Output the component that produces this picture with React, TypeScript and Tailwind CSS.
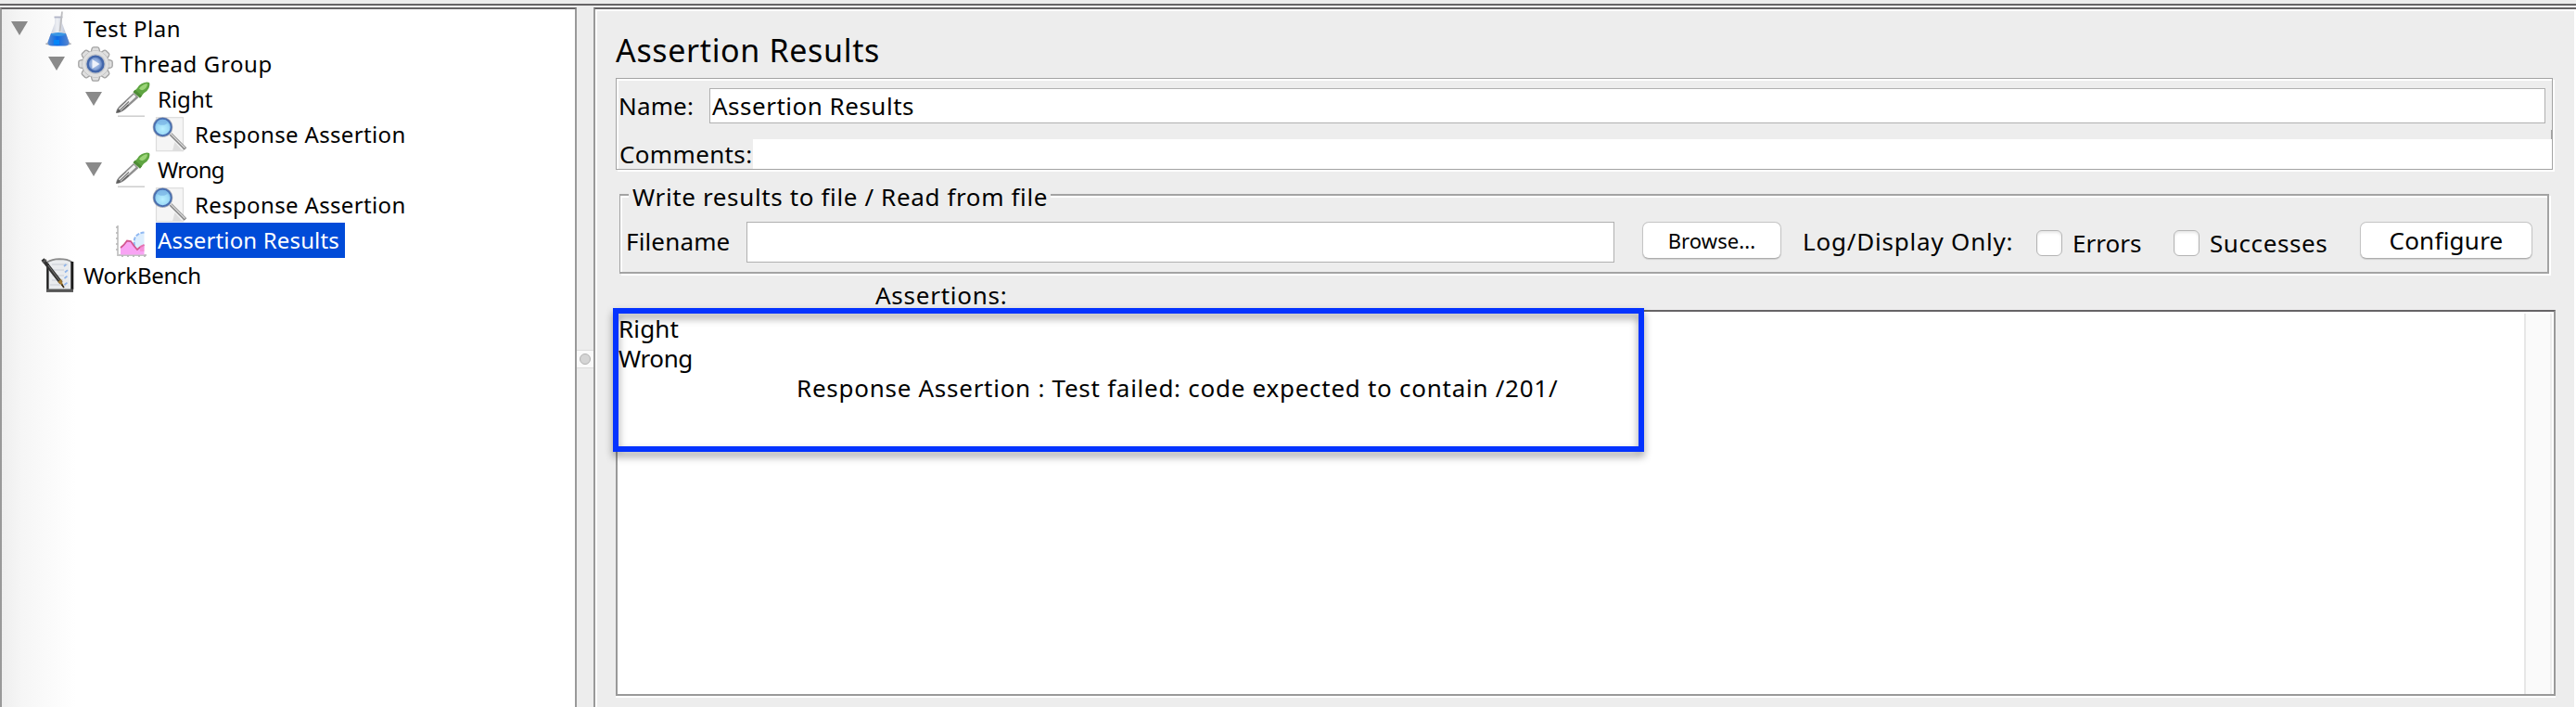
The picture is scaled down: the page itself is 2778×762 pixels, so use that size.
import React from "react";

function Flask() {
  return (
    <svg width="38" height="38" viewBox="0 0 38 38">
      <defs>
        <linearGradient id="flaskWater" x1="0" x2="1">
          <stop offset="0" stopColor="#5b8ad0" />
          <stop offset="0.45" stopColor="#0a6ae6" />
          <stop offset="1" stopColor="#5b86cc" />
        </linearGradient>
        <linearGradient id="flaskGlass" x1="0" x2="1">
          <stop offset="0" stopColor="#b9c0d2" />
          <stop offset="0.45" stopColor="#eef0f4" />
          <stop offset="1" stopColor="#aab2c8" />
        </linearGradient>
      </defs>
      <ellipse cx="19" cy="35.3" rx="14" ry="1.7" fill="#8e9099" opacity="0.75" />
      <path d="M15 7 V13 L7.5 33.5 Q7.5 37 12 37 L26 37 Q30.5 37 30.5 33.5 L23 13 V7 Z" fill="url(#flaskGlass)" />
      <path d="M11 24 H27 L30.5 33.5 Q30.5 37.6 26 37.6 L12 37.6 Q7.5 37.6 7.5 33.5 Z" fill="url(#flaskWater)" />
      <ellipse cx="19" cy="25" rx="7.8" ry="1.9" fill="#3a96e4" />
      <rect x="14" y="31" width="6" height="5" fill="#0486f8" />
      <path d="M14.5 6.5 H23.5" stroke="#b0b4c6" strokeWidth="1.8" />
      <path d="M23 0.5 L20.5 22" stroke="#bdbdc0" strokeWidth="1.8" />
    </svg>
  );
}

function Gear() {
  const teeth = [0, 45, 90, 135, 180, 225, 270, 315];
  return (
    <svg width="38" height="38" viewBox="0 0 38 38">
      <defs>
        <radialGradient id="gearCore" cx="0.45" cy="0.5" r="0.6">
          <stop offset="0" stopColor="#c3d3ee" />
          <stop offset="0.55" stopColor="#87a5d8" />
          <stop offset="1" stopColor="#35589f" />
        </radialGradient>
      </defs>
      <g fill="#dfdfdf" stroke="#a3a3a3" strokeWidth="1.3">
        {teeth.map((a) => (
          <path key={a} d="M14 7 L15.2 2.2 Q15.6 0.8 17 0.8 H21 Q22.4 0.8 22.8 2.2 L24 7" transform={`rotate(${a} 19 19)`} />
        ))}
        <circle cx="19" cy="19" r="13.8" />
      </g>
      <circle cx="19" cy="19" r="14.2" fill="#e0e0e0" />
      <circle cx="19" cy="19" r="10.8" fill="#c3c6cc" />
      <circle cx="19" cy="19" r="8.4" fill="url(#gearCore)" stroke="#4266aa" strokeWidth="2.4" />
      <path d="M15.5 14 L23.5 19 L15.5 24 Z" fill="#eef2fa" />
    </svg>
  );
}

function Dropper() {
  return (
    <svg width="38" height="38" viewBox="0 0 38 38">
      <path d="M3 37.2 H32" stroke="#bdbdbd" strokeWidth="1.4" opacity="0.8" />
      <path d="M1 34 Q1 30 5 26 L20 12 L25.5 17 L11 30 Q6 34 1 34 Z" fill="#8f8f8f" />
      <path d="M1.5 33.5 Q2 30 6 26.5 L12 21 L15 25.5 L9 30.5 Q6 33 1.5 33.5 Z" fill="#5c5c5c" />
      <path d="M5 30.5 L21.5 15" stroke="#f2f2f2" strokeWidth="3.2" />
      <path d="M5 31 L15 21.5" stroke="#777777" strokeWidth="1.2" />
      <path d="M20 11 L24 7 Q25 4 29 2 Q34 -0.5 37 1 Q38 3 36.5 7 Q34.5 11 31 12.5 L27.5 17 Z" fill="#5fa541" />
      <path d="M26 7.5 Q29 3 34.5 2 Q36 4 32 8 Q29 10.5 26 7.5 Z" fill="#9bd477" />
      <path d="M20.5 10 L28 16.5" stroke="#4d8a35" strokeWidth="3" />
    </svg>
  );
}

function Magnifier() {
  return (
    <svg width="38" height="38" viewBox="0 0 38 38">
      <defs>
        <radialGradient id="lens" cx="0.5" cy="0.6" r="0.6">
          <stop offset="0" stopColor="#b9f0ff" />
          <stop offset="0.6" stopColor="#9bd9f6" />
          <stop offset="1" stopColor="#69a9df" />
        </radialGradient>
      </defs>
      <rect x="4.5" y="0.7" width="29" height="36" fill="#f5f5f5" stroke="#dcdcdc" strokeWidth="1.2" />
      <path d="M22 36.5 L24.5 27 L33 36.5 Z" fill="#dedede" />
      <path d="M20 18.5 L36 34.5" stroke="#858585" strokeWidth="3.6" />
      <path d="M20 18 L35.5 33.5" stroke="#dcdcdc" strokeWidth="1.2" />
      <circle cx="11.5" cy="11" r="10.8" fill="#a9adb8" />
      <circle cx="11.5" cy="11" r="9.2" fill="url(#lens)" stroke="#4a6fb0" strokeWidth="1.9" />
      <ellipse cx="11" cy="5.8" rx="5.5" ry="3" fill="#7db7e6" opacity="0.8" />
    </svg>
  );
}

function ResultsChart() {
  return (
    <svg width="38" height="38" viewBox="0 0 38 38">
      <path d="M3 3 V35 H34" fill="none" stroke="#c4c4c4" strokeWidth="1.8" />
      <path d="M1 5 H3 M1 11 H3 M1 17 H3 M1 23 H3 M1 29 H3 M8 37 V35 M14 37 V35 M20 37 V35 M26 37 V35 M32 37 V35" stroke="#b4b4b4" strokeWidth="1.6" />
      <path d="M20 27 Q20 11 31.5 10.5 V27 Z" fill="#dcedfd" />
      <path d="M21 25 Q18.5 12 31.5 10.5" fill="none" stroke="#8fb8f2" strokeWidth="2" strokeDasharray="4 1.6" />
      <path d="M6 34.5 V27 L9.5 24 L13 19.5 L17 20 L20.5 25 L24 29 L27.5 25.5 L31.5 24 V34.5 Z" fill="#f8a4f4" />
      <path d="M6 27 L9.5 24 L13 19.5 L17 20 L20.5 25 L24 29 L27.5 26 L31.5 24" fill="none" stroke="#d2568f" strokeWidth="1.8" />
      <path d="M27 31 V25 L31.5 23 V31" fill="#f383c8" opacity="0.6" />
    </svg>
  );
}

function Notebook() {
  return (
    <svg width="38" height="38" viewBox="0 0 38 38">
      <path d="M7.5 4 Q8 1.5 19 1.2 Q32 1.5 33.5 4 V35.5 H7.5 Z" fill="#e9ebee" />
      <path d="M7 4.5 Q12 1.5 20 1.2 Q29 1.2 33.5 4.5" fill="none" stroke="#8b8b8b" strokeWidth="1.8" />
      <path d="M7.4 6 V34" stroke="#1c1c1c" strokeWidth="2.4" />
      <path d="M33.8 4 V34" stroke="#1c1c1c" strokeWidth="3" />
      <path d="M6 35.2 H35" stroke="#555555" strokeWidth="3.4" />
      <path d="M12 7 H29 M12 13 H25 M12 19 H25 M12 24 H24 M10 29 H27" stroke="#d3d7de" strokeWidth="1.3" />
      <path d="M25 9 l2.4 -2 M26 15.5 l3 -2.4 M25.5 22 l3 -2.4 M25.5 29 l3 -2.4" stroke="#8fb4ea" strokeWidth="1.7" />
      <path d="M2 1.5 L4.5 4.5 L22 27" fill="none" stroke="#333333" strokeWidth="4" />
      <path d="M2 5 L6 2" stroke="#5a5a5a" strokeWidth="1.8" />
      <path d="M8 8 L20 24" stroke="#777777" strokeWidth="1" />
      <path d="M18.4 26 L22 22.6 L24.6 31.2 Z" fill="#a17a33" />
      <path d="M22.5 28.5 L25 32" stroke="#3a2c14" strokeWidth="1.6" />
    </svg>
  );
}

type RowProps = {
  indent: string;
  icon: React.ReactNode;
  label: string;
  tracking: string;
  expandable?: boolean;
  selected?: boolean;
};

function TreeRow({ indent, icon, label, tracking, expandable, selected }: RowProps) {
  return (
    <div className={`flex h-[38px] items-center ${indent}`}>
      <div className="w-[32px] shrink-0">
        {expandable && (
          <svg width="18" height="15" viewBox="0 0 18 15" className="-mt-px block">
            <path d="M0 0 H18 L9 15 Z" fill="#8a8a8a" />
          </svg>
        )}
      </div>
      <div className="shrink-0">{icon}</div>
      <div
        className={`ml-[6px] h-[38px] whitespace-nowrap pl-[2px] text-[24px] leading-[38px] ${tracking} ${
          selected ? "w-[204px] bg-[#004bd8] text-white" : ""
        }`}
      >
        {label}
      </div>
    </div>
  );
}

function Checkbox() {
  return (
    <span className="block size-[28px] shrink-0 rounded-[6px] border border-[#b4b4b4] bg-white shadow-[inset_0_2px_3px_#e6e6e6]" />
  );
}

export default function App() {
  return (
    <div className="flex h-[762px] w-[2778px] flex-col overflow-hidden bg-[#ededed] font-['Noto_Sans',sans-serif] text-black">
      <div className="h-[4px] shrink-0" />
      <div className="h-[2px] shrink-0 bg-[#666466]" />
      <div className="h-[2px] shrink-0" />

      <div className="flex h-[754px]">
        <aside className="w-[622px] shrink-0 border-x-2 border-t-2 border-x-[#999999] border-t-[#666466] bg-white bg-[linear-gradient(to_right,#eeeeee_0px,#f6f6f6_22px,#ffffff_80px)] pt-[2px]">
          <TreeRow indent="pl-[10px]" expandable icon={<Flask />} label="Test Plan" tracking="tracking-[0.5px]" />
          <TreeRow indent="pl-[50px]" expandable icon={<Gear />} label="Thread Group" tracking="tracking-[0.6px]" />
          <TreeRow indent="pl-[90px]" expandable icon={<Dropper />} label="Right" tracking="tracking-[0px]" />
          <TreeRow indent="pl-[130px]" icon={<Magnifier />} label="Response Assertion" tracking="tracking-[0.35px]" />
          <TreeRow indent="pl-[90px]" expandable icon={<Dropper />} label="Wrong" tracking="tracking-[-0.8px]" />
          <TreeRow indent="pl-[130px]" icon={<Magnifier />} label="Response Assertion" tracking="tracking-[0.35px]" />
          <TreeRow indent="pl-[90px]" selected icon={<ResultsChart />} label="Assertion Results" tracking="tracking-[0.15px]" />
          <TreeRow indent="pl-[10px]" icon={<Notebook />} label="WorkBench" tracking="tracking-[-0.3px]" />
        </aside>

        <div className="w-[18px] shrink-0 pt-[369px]">
          <div className="flex h-[20px] items-center justify-center border-y border-[#dcdcdc] bg-[#fafafa]">
            <span className="block size-[12px] rounded-full border border-[#b2b2b2] bg-[#d5d5d5]" />
          </div>
        </div>

        <main className="w-[2138px] shrink-0 border-l-2 border-t-2 border-l-[#999999] border-t-[#666466]">
          <div className="h-[752px] border-l-2 border-r-2 border-t-2 border-white pl-[20px]">
            <h1 className="h-[72px] whitespace-nowrap pt-[10px] text-[34px] leading-[64px] tracking-[0.65px]">Assertion Results</h1>

            <section className="h-[99px] w-[2089px] border border-[#a3a3a3] shadow-[2px_2px_0_white,inset_2px_2px_0_white]">
              <div className="flex h-[65px] pt-[10px]">
                <label className="w-[100px] shrink-0 whitespace-nowrap pl-[2px] text-[26px] leading-[38px] tracking-[0.15px]">Name:</label>
                <div className="h-[38px] w-[1980px] whitespace-nowrap border border-[#b0b0b0] bg-white pl-[2px] text-[26px] leading-[36px] tracking-[0.5px]">
                  Assertion Results
                </div>
                <span className="ml-[6px] mt-[45px] block h-[10px] w-px bg-[#a3a3a3]" />
              </div>
              <div className="flex h-[32px]">
                <label className="ml-[2px] w-[145px] shrink-0 whitespace-nowrap pl-px text-[26px] leading-[32px] tracking-[0.35px]">Comments:</label>
                <div className="h-[32px] flex-1 bg-white" />
              </div>
            </section>

            <section className="ml-[4px] mt-[26px] h-[86px] w-[2081px] border-2 border-l border-[#a3a3a3] shadow-[2px_2px_0_white,inset_2px_2px_0_white]">
              <div className="-mt-[10px] ml-[9px] h-[32px] w-[455px] whitespace-nowrap bg-[#ededed] pl-[4px] text-[26px] leading-[22px] tracking-[0.63px]">
                Write results to file / Read from file
              </div>
              <div className="flex h-[60px] pt-[6px]">
                <label className="w-[136px] shrink-0 whitespace-nowrap pl-[6px] text-[26px] leading-[42px] tracking-[0.15px]">Filename</label>
                <div className="h-[44px] w-[936px] shrink-0 border border-[#b0b0b0] bg-white" />
                <button className="ml-[30px] h-[40px] w-[150px] shrink-0 whitespace-nowrap rounded-[7px] border border-[#c4c4c4] border-b-[#adadad] bg-white text-[22px] leading-[36px] tracking-[0.1px] shadow-[0_1px_1px_#cfcfcf]">
                  Browse...
                </button>
                <span className="ml-[23px] w-[252px] shrink-0 whitespace-nowrap text-[26px] leading-[42px] tracking-[0.8px]">Log/Display Only:</span>
                <div className="mt-[9px] flex h-[28px] w-[148px] shrink-0 items-center">
                  <Checkbox />
                  <span className="ml-[11px] text-[26px] leading-[28px]">Errors</span>
                </div>
                <div className="mt-[9px] flex h-[28px] w-[201px] shrink-0 items-center">
                  <Checkbox />
                  <span className="ml-[11px] text-[26px] leading-[28px] tracking-[0.6px]">Successes</span>
                </div>
                <button className="h-[40px] w-[186px] shrink-0 whitespace-nowrap rounded-[7px] border border-[#c4c4c4] border-b-[#adadad] bg-white text-[26px] leading-[37px] tracking-[0.25px] shadow-[0_1px_1px_#cfcfcf]">
                  Configure
                </button>
              </div>
            </section>

            <div className="h-[39px] whitespace-nowrap pl-[280px] pt-[2px] text-[26px] leading-[42px] tracking-[0.75px]">Assertions:</div>

            <section className="relative flex h-[416px] w-[2092px] border-2 border-[#999999] border-t-[#666466] bg-white pt-[2px] shadow-[0_2px_0_white]">
              <div className="w-[2056px] shrink-0 pl-px text-[26px] leading-[32px]">
                <p className="tracking-[0.15px]">Right</p>
                <p className="tracking-[-0.4px]">Wrong</p>
                <p className="pl-[192px] tracking-[0.73px]">Response Assertion : Test failed: code expected to contain /201/</p>
              </div>
              <div className="w-[30px] shrink-0 border-x-2 border-l-[#e7e7e7] border-r-[#eeeeee] bg-[#fafafa]" />
              <div className="absolute -left-[5px] -top-[4px] h-[155px] w-[1112px] border-[6px] border-[#0433ff] drop-shadow-[0_5px_4px_rgba(0,0,0,0.4)]" />
            </section>
          </div>
        </main>
      </div>
    </div>
  );
}
